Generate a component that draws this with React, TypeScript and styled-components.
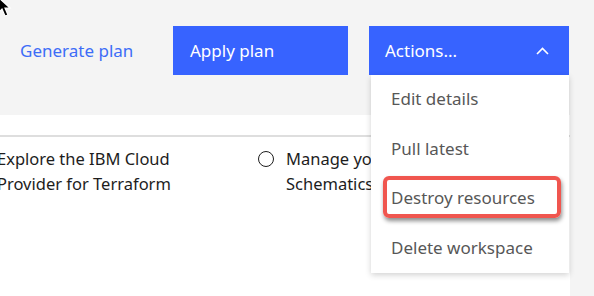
import React from "react";
import styled, { createGlobalStyle } from "styled-components";

const Global = createGlobalStyle`
  html, body { margin: 0; padding: 0; }
  body { font-family: "Noto Sans", "Open Sans", sans-serif; background: #f4f4f4; }
`;

const Page = styled.div`
  position: relative;
  width: 594px;
  height: 296px;
  overflow: hidden;
  background: #f4f4f4;
  display: flex;
  flex-direction: column;
`;

const Header = styled.div`
  height: 115px;
  box-sizing: border-box;
  padding: 26px 0 0 4px;
  display: flex;
  align-items: flex-start;
`;

const GhostButton = styled.button`
  height: 49px;
  width: 148px;
  padding: 0 0 0 16px;
  border: none;
  background: transparent;
  color: #3d6df7;
  font: 400 17px "Noto Sans", sans-serif;
  text-align: left;
  cursor: pointer;
`;

const PrimaryButton = styled.button<{ $w: number; $ml: number }>`
  height: 49px;
  width: ${(p) => p.$w}px;
  margin-left: ${(p) => p.$ml}px;
  padding: 0 20px 0 16px;
  border: none;
  background: #3763ff;
  color: #fff;
  font: 400 17px "Noto Sans", sans-serif;
  text-align: left;
  display: flex;
  align-items: center;
  justify-content: space-between;
  box-sizing: border-box;
`;

const ApplyButton = styled(PrimaryButton)`
  padding-left: 17px;
`;

const DropdownWrap = styled.div`
  position: relative;
  margin-left: 21px;
`;

const Menu = styled.ul`
  position: absolute;
  top: 49px;
  left: 2px;
  width: 198px;
  margin: 0;
  padding: 0;
  list-style: none;
  background: #fff;
  box-shadow: 0 2px 6px rgba(0, 0, 0, 0.18);
  z-index: 2;
`;

const MenuItem = styled.li`
  height: 49.5px;
  padding-left: 20px;
  display: flex;
  align-items: center;
  color: #575757;
  font-size: 17px;
  position: relative;
  top: -1px;
`;

const Highlight = styled.div`
  position: absolute;
  left: 12px;
  right: 8px;
  top: 3px;
  bottom: 5px;
  border: 4px solid #f0564f;
  border-radius: 6px;
  box-shadow: 1px 3px 4px rgba(0, 0, 0, 0.45);
  pointer-events: none;
`;

const Body = styled.div`
  flex: 1;
  width: 570px;
  background: #fff;
  padding-top: 20px;
  display: flex;
  flex-direction: column;
`;

const Divider = styled.div`
  height: 2px;
  background: #dedede;
`;

const Tiles = styled.div`
  display: flex;
  padding-top: 9px;
  margin-left: -3px;
`;

const Tile = styled.div<{ $w: number }>`
  width: ${(p) => p.$w}px;
  display: flex;
  gap: 12px;
  align-items: flex-start;
  flex-shrink: 0;
`;

const TileText = styled.div`
  color: #1d1d1d;
  font-size: 16.5px;
  line-height: 25px;
  white-space: nowrap;
`;

const Radio = styled.span`
  width: 14px;
  height: 14px;
  margin-top: 5px;
  border: 1.5px solid #1d1d1d;
  border-radius: 50%;
  flex-shrink: 0;
`;

const Cursor = styled.svg`
  position: absolute;
  left: -3px;
  top: -4px;
  z-index: 5;
`;

const Chevron = () => (
  <svg width="13" height="8" viewBox="0 0 13 8" fill="none">
    <path d="M1 7 L6.5 1.5 L12 7" stroke="#fff" strokeWidth="1.6" />
  </svg>
);

export default function App() {
  return (
    <Page>
      <Global />
      <Header>
        <GhostButton>Generate plan</GhostButton>
        <ApplyButton $w={175} $ml={21}>Apply plan</ApplyButton>
        <DropdownWrap>
          <PrimaryButton $w={200} $ml={0}>
            <span>Actions...</span>
            <Chevron />
          </PrimaryButton>
          <Menu>
            <MenuItem>Edit details</MenuItem>
            <MenuItem>Pull latest</MenuItem>
            <MenuItem>
              <Highlight />
              Destroy resources
            </MenuItem>
            <MenuItem>Delete workspace</MenuItem>
          </Menu>
        </DropdownWrap>
      </Header>
      <Body>
        <Divider />
        <Tiles>
          <Tile $w={261}>
            <TileText>
              Explore the IBM Cloud
              <br />
              Provider for Terraform
            </TileText>
          </Tile>
          <Tile $w={300}>
            <Radio />
            <TileText>
              Manage your
              <br />
              Schematics workspace
            </TileText>
          </Tile>
        </Tiles>
      </Body>
      <Cursor width="16" height="22" viewBox="0 0 16 22">
        <path d="M1 1 L1 17 L5 13 L8 20 L11 19 L8 12 L13 12 Z" fill="#000" stroke="#fff" strokeWidth="1.2" />
      </Cursor>
    </Page>
  );
}
